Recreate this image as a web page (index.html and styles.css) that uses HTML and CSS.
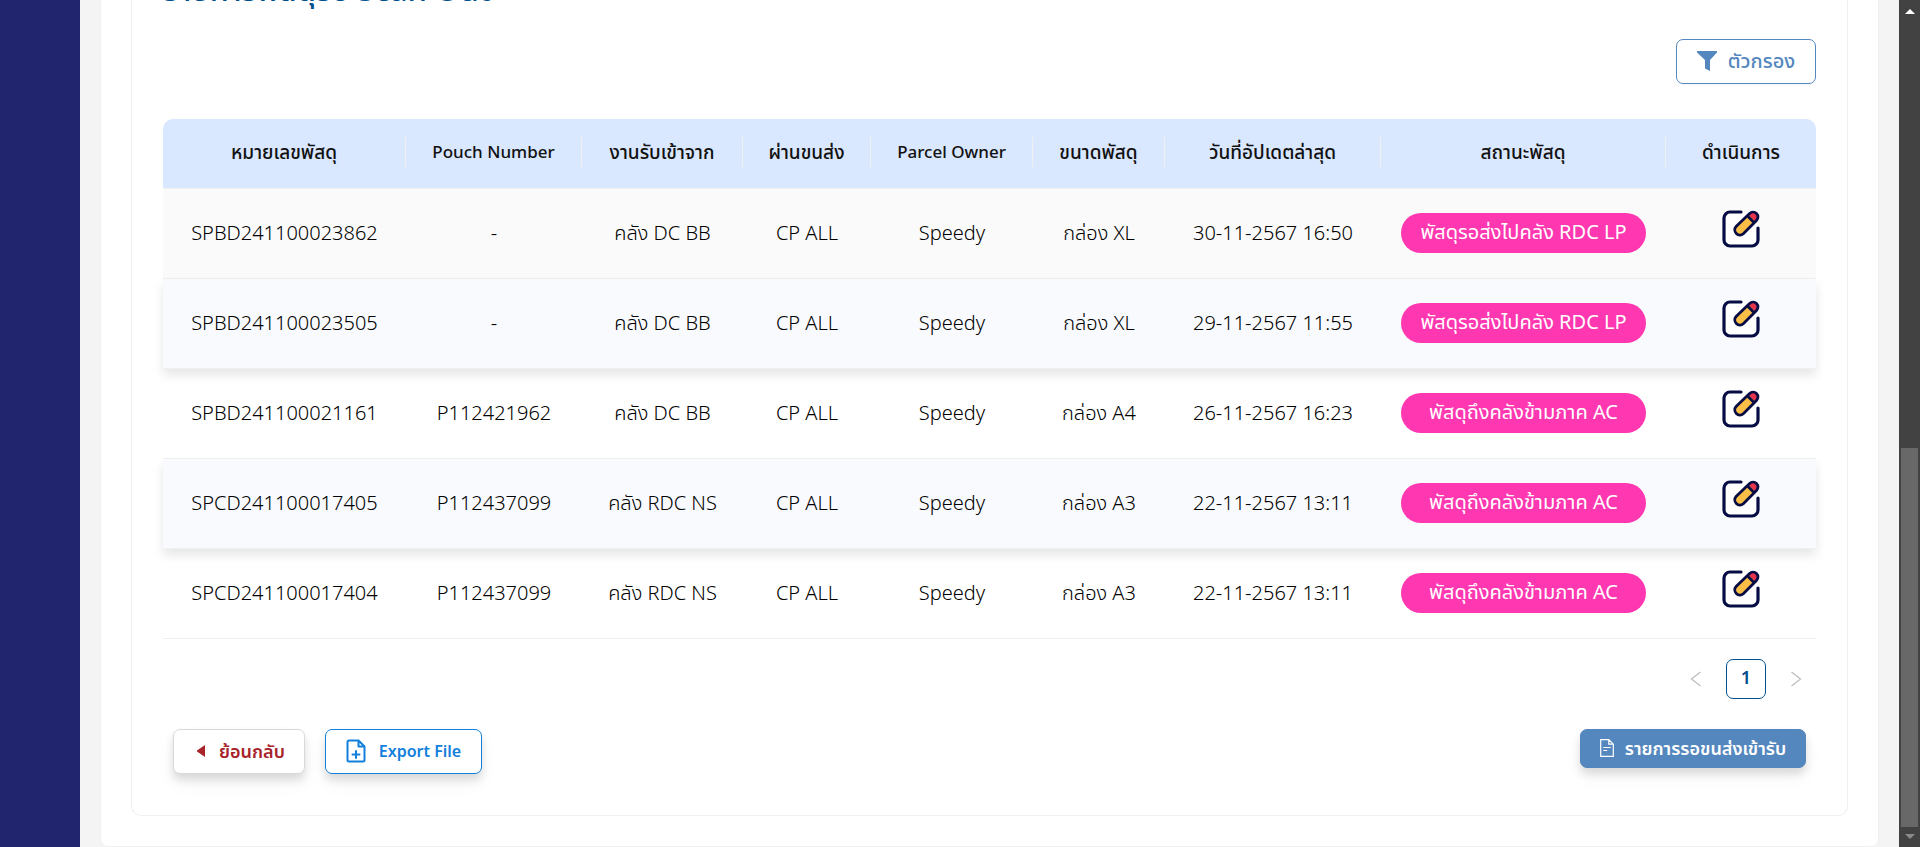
FILE: index.html
```html
<!DOCTYPE html>
<html lang="th">
<head>
<meta charset="utf-8">
<title>Scan Out</title>
<link rel="stylesheet" href="styles.css">
</head>
<body>
<svg class="sprite" aria-hidden="true">
  <symbol id="edit" viewBox="0 0 40 40">
    <rect x="3" y="3" width="34" height="34" rx="6" fill="#fff"/>
    <path d="M20 3H9a6 6 0 0 0-6 6v22a6 6 0 0 0 6 6h22a6 6 0 0 0 6-6V19" fill="none" stroke="#070d44" stroke-width="3.2" stroke-linecap="round"/>
    <path d="M27.500 4.800l-12.500 12.500a5.400 5.400 0 0 0 7.600 7.600l12.500-12.500z" fill="#fbbf47"/>
    <path d="M27.500 6l1.500-2a4.600 4.600 0 0 1 6.800 6.800l-2 1.500z" fill="#e5344b"/>
    <path d="M28.600 4.600a4.700 4.700 0 0 1 6.900 6.900L22.300 24.700a5.100 5.100 0 0 1-7.200-7.200zM26.500 7l6.700 6.700" fill="none" stroke="#070d44" stroke-width="2.800"/>
  </symbol>
</svg>
<div class="app">
  <aside class="sidebar"></aside>
  <main class="page">
    <section class="card">
      <div class="panel">
        <h2 class="title">รายการพัสดุรอ Scan Out</h2>
        <div class="toolbar">
          <button class="btn filter" type="button">
            <svg width="20" height="20" viewBox="0 0 20 20"><path d="M0 0h20v1.500L13 9v11l-5-2.500V9L0 1.500z" fill="currentColor"/></svg>
            ตัวกรอง
          </button>
        </div>
        <table class="grid">
          <colgroup>
            <col class="c-id"><col class="c-pouch"><col class="c-from"><col class="c-via"><col class="c-owner"><col class="c-size"><col class="c-date"><col class="c-status"><col class="c-act">
          </colgroup>
          <thead>
            <tr><th><span>หมายเลขพัสดุ</span></th><th class="en"><span>Pouch Number</span></th><th><span>งานรับเข้าจาก</span></th><th><span>ผ่านขนส่ง</span></th><th class="en"><span>Parcel Owner</span></th><th><span>ขนาดพัสดุ</span></th><th><span>วันที่อัปเดตล่าสุด</span></th><th><span>สถานะพัสดุ</span></th><th><span>ดำเนินการ</span></th></tr>
          </thead>
          <tbody>
            <tr class="hover"><td>SPBD241100023862</td><td>-</td><td>คลัง DC BB</td><td>CP ALL</td><td>Speedy</td><td>กล่อง XL</td><td>30-11-2567 16:50</td><td><span class="tag">พัสดุรอส่งไปคลัง RDC LP</span></td><td><button class="edit" type="button" aria-label="แก้ไข"><svg><use href="#edit"/></svg></button></td></tr>
            <tr class="raised"><td>SPBD241100023505</td><td>-</td><td>คลัง DC BB</td><td>CP ALL</td><td>Speedy</td><td>กล่อง XL</td><td>29-11-2567 11:55</td><td><span class="tag">พัสดุรอส่งไปคลัง RDC LP</span></td><td><button class="edit" type="button" aria-label="แก้ไข"><svg><use href="#edit"/></svg></button></td></tr>
            <tr><td>SPBD241100021161</td><td>P112421962</td><td>คลัง DC BB</td><td>CP ALL</td><td>Speedy</td><td>กล่อง A4</td><td>26-11-2567 16:23</td><td><span class="tag">พัสดุถึงคลังข้ามภาค AC</span></td><td><button class="edit" type="button" aria-label="แก้ไข"><svg><use href="#edit"/></svg></button></td></tr>
            <tr class="raised"><td>SPCD241100017405</td><td>P112437099</td><td>คลัง RDC NS</td><td>CP ALL</td><td>Speedy</td><td>กล่อง A3</td><td>22-11-2567 13:11</td><td><span class="tag">พัสดุถึงคลังข้ามภาค AC</span></td><td><button class="edit" type="button" aria-label="แก้ไข"><svg><use href="#edit"/></svg></button></td></tr>
            <tr><td>SPCD241100017404</td><td>P112437099</td><td>คลัง RDC NS</td><td>CP ALL</td><td>Speedy</td><td>กล่อง A3</td><td>22-11-2567 13:11</td><td><span class="tag">พัสดุถึงคลังข้ามภาค AC</span></td><td><button class="edit" type="button" aria-label="แก้ไข"><svg><use href="#edit"/></svg></button></td></tr>
          </tbody>
        </table>
        <nav class="pager">
          <button type="button" aria-label="ก่อนหน้า"><svg width="12" height="16" viewBox="0 0 12 16"><path d="M10.500 1L1.500 8l9 7" fill="none" stroke="currentColor" stroke-width="1.300"/></svg></button>
          <button type="button" class="current">1</button>
          <button type="button" aria-label="ถัดไป"><svg width="12" height="16" viewBox="0 0 12 16"><path d="M1.500 1l9 7-9 7" fill="none" stroke="currentColor" stroke-width="1.300"/></svg></button>
        </nav>
        <div class="actions">
          <button class="btn back" type="button">
            <svg width="8" height="12" viewBox="0 0 8 12"><path d="M8 0v12L0 6.500v-1z" fill="currentColor"/></svg>
            ย้อนกลับ
          </button>
          <button class="btn export" type="button">
            <svg width="20" height="24" viewBox="0 0 20 24" fill="none" stroke="currentColor" stroke-width="2" stroke-linejoin="round" stroke-linecap="round"><path d="M12.500 1.500H3A1.500 1.500 0 0 0 1.500 3v18A1.500 1.500 0 0 0 3 22.500h14a1.500 1.500 0 0 0 1.500-1.500V7.500zM12.500 1.500v6h6M10 12v7M6.500 15.500h7"/></svg>
            Export File
          </button>
          <button class="btn list" type="button">
            <svg width="14" height="18" viewBox="0 0 14 18" fill="none" stroke="currentColor" stroke-width="1.200"><path d="M8.800.7H.7v16.600h12.600V5.200zM8.800.7v4.500h4.500M3.200 8.500h7.600M3.200 11.500h4"/></svg>
            รายการรอขนส่งเข้ารับ
          </button>
        </div>
      </div>
    </section>
  </main>
  <div class="scroll" aria-hidden="true"><i class="up"></i><i class="thumb"></i><i class="down"></i></div>
</div>
</body>
</html>
```

FILE: styles.css
```css
* { box-sizing: border-box; }
body {
  margin: 0;
  background: #f4f4f4;
  color: #111;
  font-family: "Noto Sans", "Noto Sans Thai", "Open Sans", sans-serif;
  font-size: 16px;
}
button { font: inherit; color: inherit; cursor: pointer; }
.sprite { display: none; }
.app { display: flex; height: 100vh; overflow: hidden; }
.sidebar { flex: 0 0 80px; background: #21256d; }
.page { flex: 1; min-width: 0; padding: 0 20px; }
.card {
  background: #fff;
  border: 1px solid #f0f0f0;
  border-top: 0;
  border-radius: 0 0 8px 8px;
  padding: 0 30px 30px;
}
.panel {
  border: 1px solid #f0f0f0;
  border-top: 0;
  border-radius: 0 0 10px 10px;
  padding: 0 31px 41px;
}
.title {
  margin: -32px 0 0;
  color: #00508f;
  font-size: 31px;
  font-weight: 500;
  line-height: 42px;
}
.toolbar { display: flex; justify-content: flex-end; padding: 29px 0 35px; }
.btn {
  display: flex;
  align-items: center;
  justify-content: center;
  height: 45px;
  border: 1px solid;
  border-radius: 7px;
  background: #fff;
  font-weight: 600;
  line-height: 24px;
  white-space: nowrap;
}
.filter { gap: 11px; width: 140px; padding: 0 0 2px; color: #5487bd; font-size: 20px; font-weight: 500; box-shadow: 0 2px 0 rgba(0, 0, 0, .02); }

.grid { width: 100%; table-layout: fixed; border-collapse: separate; border-spacing: 0; text-align: center; }
.c-id { width: 243px; }
.c-pouch { width: 176px; }
.c-from { width: 161px; }
.c-via { width: 128px; }
.c-owner { width: 162px; }
.c-size { width: 132px; }
.c-date { width: 216px; }
.c-status { width: 285px; }
.c-act { width: 150px; }
.grid th {
  height: 70px;
  padding: 0 0 4px;
  background: #d9e7ff;
  border-bottom: 1px solid #f0f0f0;
  font-size: 19px;
  font-weight: 500;
  white-space: nowrap;
}
.grid th.en { font-size: 17px; }
.grid th span { display: block; line-height: 30px; border-right: 1px solid #f0f0f0; }
.grid th:last-child span { border: 0; }
.grid th:first-child { border-top-left-radius: 10px; }
.grid th:last-child { border-top-right-radius: 10px; }
.grid td { height: 90px; padding: 0 0 2px; border-bottom: 1px solid #f0f0f0; color: #000; font-size: 20px; font-weight: 300; line-height: 24px; white-space: nowrap; }
.hover { background: #fafafa; }
.raised { background: #f8fafd; box-shadow: 0 6px 10px rgba(0, 0, 0, .1); }
.tag {
  display: flex;
  align-items: center;
  justify-content: center;
  height: 40px;
  margin: 0 20px;
  padding-bottom: 2px;
  border-radius: 20px;
  background: #ff37b1;
  color: #fff;
  font-weight: 400;
}
.edit { width: 40px; height: 40px; margin-bottom: 8px; padding: 0; border: 0; background: none; vertical-align: middle; }
.edit svg { display: block; width: 40px; height: 40px; }

.pager { display: flex; justify-content: flex-end; gap: 10px; padding-top: 20px; }
.pager button {
  display: flex;
  align-items: center;
  justify-content: center;
  width: 40px;
  height: 40px;
  padding: 0;
  border: 0;
  background: #fff;
  color: #bfbfbf;
}
.pager .current { padding-bottom: 4px; border: 1px solid #00508f; border-radius: 7px; color: #00508f; font-size: 18px; font-weight: 600; }

.actions { display: flex; align-items: flex-start; gap: 20px; padding: 30px 10px 0; }
.actions .btn { padding: 0 0 1px; box-shadow: 0 6px 8px rgba(0, 0, 0, .12), 0 10px 20px rgba(0, 0, 0, .04); }
.actions .back { gap: 14px; width: 132px; padding-left: 4px; color: #a8232a; font-size: 18px; border-color: #d9d9d9; }
.export { gap: 13px; width: 157px; color: #1280dc; }
.actions .list { gap: 11px; width: 226px; height: 39px; margin-left: auto; background: #5487bd; border-color: #5487bd; color: #fff; font-size: 18px; }

.scroll { flex: 0 0 21px; display: flex; flex-direction: column; align-items: center; padding: 9px 0 8px; background: #424242; }
.up, .down { border: 5px solid transparent; }
.up { border-top: 0; border-bottom-color: #fff; }
.down { border-bottom: 0; border-top-color: #8a8a8a; margin-top: 7px; }
.thumb { width: 17px; height: 379px; margin-top: auto; background: #686868; }
```
